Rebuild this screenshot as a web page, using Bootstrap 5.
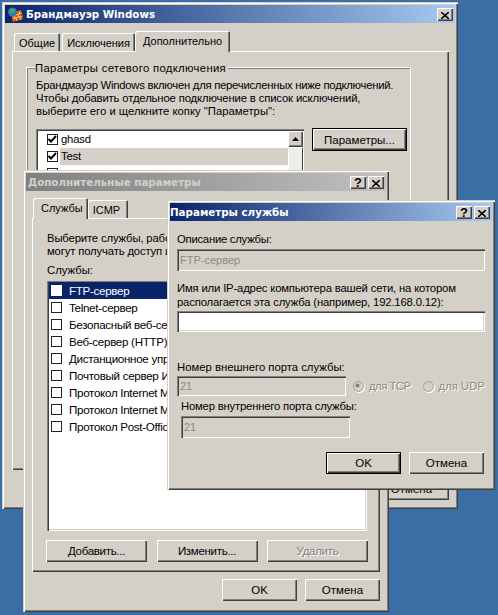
<!DOCTYPE html>
<html>
<head>
  <title>Брандмауэр Windows</title>
  <link href="https://cdn.jsdelivr.net/npm/bootstrap@5.3.0/dist/css/bootstrap.min.css" rel="stylesheet">
  <style>
    html, body { height: 100%; margin: 0; }
    body { background: #3a6ea5; overflow: hidden; font: 11.3px/13px "Liberation Sans", Arial, sans-serif; color: #000; }
    .desktop { position: relative; width: 498px; height: 615px; overflow: hidden; background: #3a6ea5; }

    /* windows */
    .xp-win { position: absolute; padding: 3px; background: #d4d0c8; box-shadow: inset 1px 1px #d4d0c8, inset 2px 2px #fff, inset -1px -1px #404040, inset -2px -2px #808080; }
    .win-firewall { left: 2px; top: 2px; width: 456px; height: 507px; z-index: 1; }
    .win-options { left: 23px; top: 170px; width: 366px; height: 442px; z-index: 2; }
    .win-service { left: 167px; top: 200px; width: 328px; height: 290px; z-index: 3; }
    .win-service .xp-title { padding-left: 0; }

    .xp-title { height: 18px; padding: 0 2px 0 2px; background: linear-gradient(90deg, #0a246a, #a6caf0); color: #fff; font: bold 10.3px/18px "DejaVu Sans", sans-serif; }
    .xp-title.off { background: linear-gradient(90deg, #808080, #c0c0c0); color: #d4d0c8; }
    .xp-title .fw-icon { margin: 0 3px 0 1px; }
    .cap-btn { width: 16px; height: 13px; margin-left: 2px; padding: 0; border: 0; border-radius: 0; background: #d4d0c8; color: #000; font: bold 13px/13px "Liberation Sans", sans-serif; box-shadow: inset 1px 1px #fff, inset -1px -1px #404040, inset -2px -2px #808080; }
    .cap-btn svg { display: block; margin: 3px auto 0; }

    /* tabs */
    .xp-tabs { flex-wrap: nowrap; height: 20px; border: 0; position: relative; z-index: 1; }
    .xp-tabs .nav-link { height: 18px; margin: 2px 0 0; padding: 3px 5px 0; border: 0; border-radius: 2px 2px 0 0; background: #d4d0c8; color: #000; font-size: 11px; line-height: 14px; box-shadow: inset 1px 1px #fff, inset -1px 0 #404040, inset -2px 0 #808080; }
    .xp-tabs .nav-link.active { height: 21px; margin: 0; padding: 3px 8px 0; background: #d4d0c8; color: #000; }
    .tabs-a .nav-item:nth-child(2) { margin-left: 2px; }
    .tabs-b .nav-link { padding-right: 8px; }
    .tabs-b .nav-link.active { padding-right: 5px; }
    .xp-panel { background: #d4d0c8; box-shadow: inset 1px 1px #fff, inset -1px -1px #404040, inset -2px -2px #808080; }

    /* group box */
    .xp-group { margin: 16px 38px 0 14px; height: 300px; padding: 0 0 0 9px; border: 1px solid #fff; box-shadow: inset 1px 1px #808080; }
    .xp-legend { display: table; margin: -6px 0 4px -1px; padding: 0 2px 0 0; background: #d4d0c8; letter-spacing: .33px; }
    .net-wrap { margin-top: 11px; }
    .line-one { letter-spacing: -.26px; }
    .line-two { letter-spacing: -.14px; }

    /* sunken boxes */
    .sunken { background: #fff; box-shadow: inset 1px 1px #808080, inset 2px 2px #404040, inset -1px -1px #fff, inset -2px -2px #d4d0c8; }
    .net-list { width: 268px; height: 80px; padding: 2px 1px 2px 2px; flex-shrink: 0; }
    .net-row { display: flex; align-items: center; height: 17px; padding-left: 9px; border: 0; background: transparent; }
    .net-row .form-check-input { margin-right: 2px; }
    .net-row span { flex-grow: 1; height: 17px; line-height: 17px; padding-left: 1px; letter-spacing: -.2px; }
    .net-row.picked span { background: #d4d0c8; }
    .xp-scroll { width: 15px; flex-shrink: 0; }
    .scroll-up { height: 16px; padding-top: 6px; background: #d4d0c8; box-shadow: inset 1px 1px #fff, inset -1px -1px #404040, inset -2px -2px #808080; }
    .scroll-up svg { display: block; margin: 0 auto; }
    .scroll-thumb { height: 60px; background: #eeede8; box-shadow: inset 1px 1px #fff, inset -1px -1px #404040; }

    .svc-list { height: 250px; padding: 1px 2px; }
    .svc-row { display: flex; align-items: center; height: 17px; padding: 0 0 0 2px; border: 0; border-radius: 0; background: transparent; color: #000; font-size: 11.6px; line-height: 17px; letter-spacing: -.3px; white-space: nowrap; overflow: hidden; }
    .svc-row .form-check-input { margin-right: 7px; flex-shrink: 0; }
    .svc-row.active { background: #0a246a; color: #fff; }
    .svc-row.active .form-check-input { border-color: #fff; }

    /* checks and radios */
    .form-check-input.xp-box { width: 11px; height: 11px; margin-top: 0; border: 1px solid #222; border-radius: 0; background-color: #fff; box-shadow: none; opacity: 1; }
    .form-check-input.xp-box:checked { background-color: #fff; border-color: #222; background-size: 11px; background-image: url("data:image/svg+xml,%3csvg xmlns='http://www.w3.org/2000/svg' viewBox='0 0 11 11'%3e%3cpath fill='none' stroke='%23000' stroke-width='2' d='M1.5 5l2.5 2.5 5-5.5'/%3e%3c/svg%3e"); }
    .form-check-input.xp-radio { width: 11px; height: 11px; margin: 0 5px 0 0; flex-shrink: 0; border: 1px solid #a09e98; background-color: #d4d0c8; opacity: 1; box-shadow: 1px 1px #fff; }
    .form-check-input.xp-radio:checked { background-color: #d4d0c8; border-color: #a09e98; background-size: 11px; background-image: url("data:image/svg+xml,%3csvg xmlns='http://www.w3.org/2000/svg' viewBox='0 0 11 11'%3e%3ccircle cx='4.5' cy='4.5' r='2' fill='%23808080'/%3e%3c/svg%3e"); }

    /* buttons */
    .xp-btn { height: 22px; padding: 0; border: 0; border-radius: 0; background: #d4d0c8; color: #000; font-size: 11.5px; line-height: 20px; box-shadow: inset 1px 1px #fff, inset -1px -1px #404040, inset -2px -2px #808080; }
    .xp-btn:disabled { background: #d4d0c8; color: #808080; opacity: 1; text-shadow: 1px 1px #fff; }
    .xp-btn.is-default { border: 1px solid #000; box-shadow: inset 1px 1px #fff, inset -1px -1px #404040, inset -2px -2px #808080; }
    .btn-mid { width: 75px; }
    .btn-big { width: 101px; letter-spacing: -.3px; }
    .btn-param { width: 95px; height: 23px; margin: -1px 0 0 8px; flex-shrink: 0; }

    /* text fields */
    .xp-field { display: block; height: 22px; padding: 1px 3px; border: 0; border-radius: 0; font-size: 11px; line-height: 14px; color: #808080; box-shadow: inset 1px 1px #808080, inset 2px 2px #404040, inset -1px -1px #fff, inset -2px -2px #d4d0c8; }
    .xp-field:disabled { background: #d4d0c8; color: #8c8a84; opacity: 1; }
    .field-wide { width: 308px; }
    .field-addr { height: 21px; }
    .field-port { width: 169px; flex-shrink: 0; }
    .field-ext { height: 20px; }
    .muted-opt { color: #8c8a84; text-shadow: 1px 1px #fff; white-space: nowrap; }
    .muted-gap { margin-right: 12px; letter-spacing: -.5px; }

    /* spacing inside windows */
    .tabs-a { margin: 8px 0 0 9px; }
    .panel-a { height: 419px; margin: 0 6px 0 7px; overflow: hidden; }
    .foot-a { margin: 8px 6px 0 0; }
    .tabs-b { margin: 7px 0 0 7px; }
    .panel-b { height: 354px; margin: 0 6px; padding: 14px 13px 10px 15px; }
    .panel-b .nw { white-space: nowrap; letter-spacing: -.15px; }
    .svc-caption { margin: 6px 0 4px; }
    .svc-actions { margin: 9px -1px 0 -1px; }
    .foot-b { margin: 7px 6px 0 0; }
    .body-c { padding: 11px 8px 0 7px; }
    .body-c .lbl { display: block; line-height: 14px; white-space: nowrap; }
    .body-c .lbl-tight { letter-spacing: -.25px; }
    .body-c .lbl-addr { letter-spacing: -.17px; }
    .body-c .lbl-inner { letter-spacing: -.2px; }
    .gap-a { margin-top: 3px; }
    .gap-b { margin-top: 10px; }
    .gap-c { margin-top: 2px; }
    .gap-d { margin-top: 28px; }
    .indent { margin-left: 4px; }
    .foot-c { margin-top: 14px; }
    .radio-wrap { margin-left: 7px; }
  </style>
</head>
<body>
  <div class="desktop">

    <!-- back window -->
    <div class="xp-win win-firewall">
      <div class="xp-title d-flex align-items-center">
        <svg class="fw-icon" width="15" height="15" viewBox="0 0 15 15">
          <path d="M3 6l10-3 2 9-10 3z" fill="#e0501c"/>
          <path d="M4 9l10-3M4.500 12l10-3M7 5l1 3M11 4l1 3M6 8.500l1 3M10 7.500l1 3M8 11l1 3M12 10l1 3" stroke="#f8c860" stroke-width="1"/>
          <circle cx="4.500" cy="5" r="4.500" fill="#2a78c0"/>
          <path d="M1.500 3l3-2 2.500 1.500-1 3-2.500 1-2-1z" fill="#40a850"/>
        </svg>
        <span class="flex-grow-1">Брандмауэр Windows</span>
        <button class="btn cap-btn" type="button" aria-label="Закрыть">
          <svg width="8" height="7" viewBox="0 0 8 7"><path d="M0 0l8 7M8 0L0 7" stroke="#000" stroke-width="1.6"/></svg>
        </button>
      </div>
      <ul class="nav nav-tabs xp-tabs tabs-a">
        <li class="nav-item"><a class="nav-link" href="#">Общие</a></li>
        <li class="nav-item"><a class="nav-link" href="#">Исключения</a></li>
        <li class="nav-item"><a class="nav-link active" href="#">Дополнительно</a></li>
      </ul>
      <div class="xp-panel panel-a">
        <div class="xp-group">
          <div class="xp-legend">Параметры сетевого подключения</div>
          <div><span class="line-one">Брандмауэр Windows включен для перечисленных ниже подключений.</span><br><span class="line-two">Чтобы добавить отдельное подключение в список исключений,</span><br>выберите его и щелкните копку "Параметры":</div>
          <div class="d-flex align-items-start net-wrap">
            <div class="sunken net-list d-flex">
              <div class="list-group list-group-flush flex-grow-1">
                <label class="net-row"><input class="form-check-input xp-box" type="checkbox" checked><span>ghasd</span></label>
                <label class="net-row picked"><input class="form-check-input xp-box" type="checkbox" checked><span>Test</span></label>
                <label class="net-row"><input class="form-check-input xp-box" type="checkbox"><span></span></label>
              </div>
              <div class="xp-scroll">
                <div class="scroll-up"><svg width="7" height="4" viewBox="0 0 7 4"><path d="M3.500 0L7 4H0z"/></svg></div>
                <div class="scroll-thumb"></div>
              </div>
            </div>
            <button class="btn xp-btn is-default btn-param" type="button">Параметры...</button>
          </div>
        </div>
      </div>
      <div class="d-flex justify-content-end gap-2 foot-a">
        <button class="btn xp-btn btn-mid" type="button">OK</button>
        <button class="btn xp-btn btn-mid" type="button">Отмена</button>
      </div>
    </div>

    <!-- middle window -->
    <div class="xp-win win-options">
      <div class="xp-title off d-flex align-items-center">
        <span class="flex-grow-1">Дополнительные параметры</span>
        <button class="btn cap-btn" type="button">?</button>
        <button class="btn cap-btn" type="button" aria-label="Закрыть">
          <svg width="8" height="7" viewBox="0 0 8 7"><path d="M0 0l8 7M8 0L0 7" stroke="#000" stroke-width="1.6"/></svg>
        </button>
      </div>
      <ul class="nav nav-tabs xp-tabs tabs-b">
        <li class="nav-item"><a class="nav-link active" href="#">Службы</a></li>
        <li class="nav-item"><a class="nav-link" href="#">ICMP</a></li>
      </ul>
      <div class="xp-panel panel-b">
        <div class="nw">Выберите службы, работающие в вашей сети, к которым пользователи<br>могут получать доступ из Интернета.</div>
        <div class="svc-caption">Службы:</div>
        <div class="sunken svc-list">
          <div class="list-group list-group-flush">
            <label class="list-group-item svc-row active"><input class="form-check-input xp-box" type="checkbox">FTP-сервер</label>
            <label class="list-group-item svc-row"><input class="form-check-input xp-box" type="checkbox">Telnet-сервер</label>
            <label class="list-group-item svc-row"><input class="form-check-input xp-box" type="checkbox">Безопасный веб-сервер (HTTPS)</label>
            <label class="list-group-item svc-row"><input class="form-check-input xp-box" type="checkbox">Веб-сервер (HTTP)</label>
            <label class="list-group-item svc-row"><input class="form-check-input xp-box" type="checkbox">Дистанционное управление рабочим столом</label>
            <label class="list-group-item svc-row"><input class="form-check-input xp-box" type="checkbox">Почтовый сервер Интернета (SMTP)</label>
            <label class="list-group-item svc-row"><input class="form-check-input xp-box" type="checkbox">Протокол Internet Mail Access Protocol 3</label>
            <label class="list-group-item svc-row"><input class="form-check-input xp-box" type="checkbox">Протокол Internet Mail Access Protocol 4</label>
            <label class="list-group-item svc-row"><input class="form-check-input xp-box" type="checkbox">Протокол Post-Office Protocol 3</label>
          </div>
        </div>
        <div class="d-flex justify-content-between svc-actions">
          <button class="btn xp-btn btn-big" type="button">Добавить...</button>
          <button class="btn xp-btn btn-big" type="button">Изменить...</button>
          <button class="btn xp-btn btn-big" type="button" disabled>Удалить</button>
        </div>
      </div>
      <div class="d-flex justify-content-end gap-2 foot-b">
        <button class="btn xp-btn btn-mid" type="button">OK</button>
        <button class="btn xp-btn btn-mid" type="button">Отмена</button>
      </div>
    </div>

    <!-- front window -->
    <div class="xp-win win-service">
      <div class="xp-title d-flex align-items-center">
        <span class="flex-grow-1">Параметры службы</span>
        <button class="btn cap-btn" type="button">?</button>
        <button class="btn cap-btn" type="button" aria-label="Закрыть">
          <svg width="8" height="7" viewBox="0 0 8 7"><path d="M0 0l8 7M8 0L0 7" stroke="#000" stroke-width="1.6"/></svg>
        </button>
      </div>
      <div class="body-c">
        <label class="lbl lbl-tight">Описание службы:</label>
        <input class="form-control xp-field field-wide gap-a" type="text" value="FTP-сервер" disabled>
        <label class="lbl lbl-addr gap-b">Имя или IP-адрес компьютера вашей сети, на котором<br>располагается эта служба (например, 192.168.0.12):</label>
        <input class="form-control xp-field field-wide field-addr bg-white gap-c" type="text">
        <label class="lbl gap-d">Номер внешнего порта службы:</label>
        <div class="d-flex align-items-center gap-c">
          <input class="form-control xp-field field-port field-ext" type="text" value="21" disabled>
          <div class="d-flex align-items-center radio-wrap">
            <input class="form-check-input xp-radio" type="radio" name="proto" checked disabled>
            <span class="muted-opt muted-gap">для TCP</span>
            <input class="form-check-input xp-radio" type="radio" name="proto" disabled>
            <span class="muted-opt">для UDP</span>
          </div>
        </div>
        <label class="lbl lbl-inner gap-a indent">Номер внутреннего порта службы:</label>
        <input class="form-control xp-field field-port indent gap-a" type="text" value="21" disabled>
        <div class="d-flex justify-content-end gap-2 foot-c">
          <button class="btn xp-btn is-default btn-mid" type="button">OK</button>
          <button class="btn xp-btn btn-mid" type="button">Отмена</button>
        </div>
      </div>
    </div>

  </div>
  <script src="https://cdn.jsdelivr.net/npm/bootstrap@5.3.0/dist/js/bootstrap.bundle.min.js"></script>
</body>
</html>
